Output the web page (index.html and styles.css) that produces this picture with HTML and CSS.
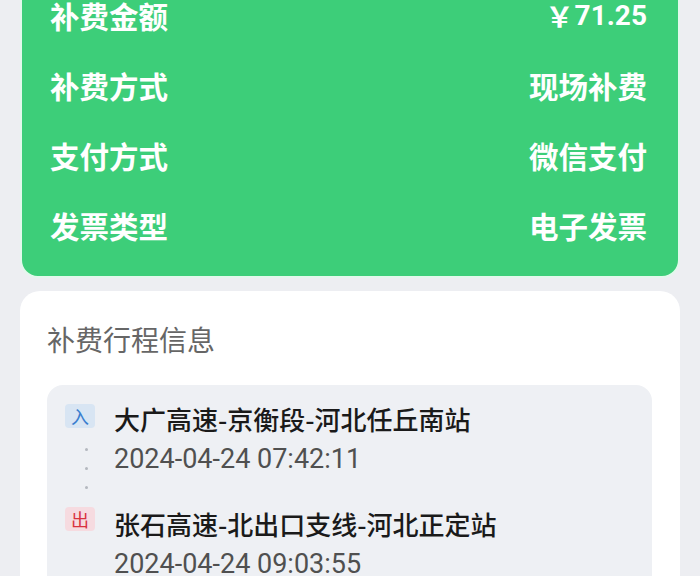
FILE: index.html
```html
<!DOCTYPE html>
<html lang="zh-CN">
<head>
<meta charset="utf-8">
<link rel="stylesheet" href="styles.css">
</head>
<body>
<div class="page">
  <section class="summary">
    <div class="row"><span>补费金额</span><span class="amount"><span class="yen">￥</span>71.25</span></div>
    <div class="row"><span>补费方式</span><span>现场补费</span></div>
    <div class="row"><span>支付方式</span><span>微信支付</span></div>
    <div class="row"><span>发票类型</span><span>电子发票</span></div>
  </section>
  <section class="trip">
    <h2 class="trip-title">补费行程信息</h2>
    <div class="route">
      <div class="stop">
        <div class="rail">
          <span class="badge badge-in">入</span>
          <span class="dots"><i></i><i></i><i></i></span>
        </div>
        <div class="info">
          <div class="station">大广高速-京衡段-河北任丘南站</div>
          <div class="time">2024-04-24 07:42:11</div>
        </div>
      </div>
      <div class="stop">
        <div class="rail">
          <span class="badge badge-out">出</span>
        </div>
        <div class="info">
          <div class="station">张石高速-北出口支线-河北正定站</div>
          <div class="time">2024-04-24 09:03:55</div>
        </div>
      </div>
    </div>
  </section>
</div>
</body>
</html>
```
FILE: styles.css
```css
html, body {
  margin: 0;
  padding: 0;
  background: #edeef2;
}
body {
  font-family: "Noto Sans CJK SC", "Noto Sans", sans-serif;
  overflow: hidden;
  height: 576px;
}
.page {
  margin-top: -25px;
  padding: 0 20px;
  display: flex;
  flex-direction: column;
  gap: 13px;
}
.summary {
  background: #3dce79;
  border: 2px solid #e3f8ec;
  border-radius: 18px;
  padding: 4px 31px 15px 28px;
  color: #ffffff;
  font-weight: 700;
  font-size: 29.5px;
}
.row {
  height: 70px;
  display: flex;
  align-items: center;
  justify-content: space-between;
  line-height: 1;
}
.amount {
  font-family: Roboto, "Noto Sans CJK SC", sans-serif;
  font-weight: 700;
  font-size: 28px;
  display: flex;
  align-items: center;
}
.yen {
  font-family: "Noto Sans CJK SC", sans-serif;
  font-size: 28px;
  margin-right: 1px;
}
.trip {
  background: #ffffff;
  border-radius: 20px;
  padding: 30px 28px 40px 27px;
}
.trip-title {
  margin: 0;
  font-size: 28px;
  line-height: 36px;
  font-weight: 400;
  color: #666666;
}
.route {
  margin-top: 28px;
  background: #eef0f4;
  border-radius: 16px;
  padding: 19px 18px 20px 18px;
}
.stop {
  display: flex;
  gap: 19px;
}
.rail {
  width: 30px;
  display: flex;
  flex-direction: column;
  align-items: center;
  flex-shrink: 0;
}
.badge {
  width: 30px;
  height: 24px;
  border-radius: 4px;
  font-size: 18px;
  line-height: 24px;
  text-align: center;
}
.badge-in {
  background: #d8e5f3;
  color: #3a7ecf;
}
.badge-out {
  background: #f6dbe0;
  color: #d9323f;
}
.dots {
  display: flex;
  flex-direction: column;
  gap: 16px;
  padding: 20px 0 18px;
  margin-left: 12px;
}
.dots i {
  display: block;
  width: 3px;
  height: 3px;
  border-radius: 50%;
  background: #b4b8bf;
}
.info {
  padding-top: 0;
}
.stop + .stop .info {
  padding-top: 2px;
}
.station {
  font-size: 26px;
  line-height: 30px;
  font-weight: 500;
  color: #1a1a1a;
  white-space: nowrap;
}
.time {
  margin-top: 10px;
  font-family: Roboto, "Noto Sans CJK SC", sans-serif;
  font-size: 27px;
  line-height: 30px;
  color: #505050;
  white-space: nowrap;
}
```
